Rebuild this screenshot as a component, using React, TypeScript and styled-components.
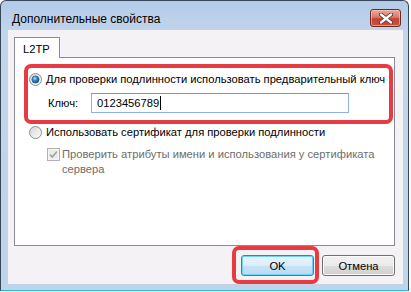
import { FC } from "react";
import styled, { createGlobalStyle } from "styled-components";

const GlobalStyle = createGlobalStyle`
  html, body {
    margin: 0;
    padding: 0;
    background: #ffffff;
  }
  body {
    font-family: "Liberation Sans", Arial, sans-serif;
    font-size: 11.2px;
    color: #000000;
  }
`;

const Radio: FC<{ checked?: boolean }> = ({ checked }) => (
  <RadioBox width="13" height="13" viewBox="0 0 13 13">
    <defs>
      <linearGradient id={checked ? "rb-on" : "rb-off"} x1="0" y1="0" x2="1" y2="1">
        <stop offset="0" stopColor="#d4d4d4" />
        <stop offset="1" stopColor="#ffffff" />
      </linearGradient>
      <radialGradient id="rb-dot" cx="0.4" cy="0.35" r="0.7">
        <stop offset="0" stopColor="#b9e4ff" />
        <stop offset="0.45" stopColor="#2c89d6" />
        <stop offset="1" stopColor="#123f7a" />
      </radialGradient>
    </defs>
    <circle cx="6.5" cy="6.5" r="6" fill={`url(#${checked ? "rb-on" : "rb-off"})`} stroke="#8e8f8f" />
    {checked && <circle cx="6.5" cy="6.5" r="3.6" fill="url(#rb-dot)" stroke="#1c4f8c" strokeWidth="0.6" />}
  </RadioBox>
);

const DisabledCheck: FC = () => (
  <CheckBoxIcon width="13" height="13" viewBox="0 0 13 13">
    <rect x="0.5" y="0.5" width="12" height="12" fill="#f4f4f4" stroke="#b1b1b1" />
    <rect x="2.5" y="2.5" width="8" height="8" fill="#eaeaea" stroke="none" />
    <path d="M3 6.6 L5.2 9 L10 3.4" fill="none" stroke="#a3a3a3" strokeWidth="1.6" />
  </CheckBoxIcon>
);

const App: FC = () => {
  return (
    <>
      <GlobalStyle />
      <Window>
        <TitleBar>
          <Title>Дополнительные свойства</Title>
          <CloseButton aria-label="Закрыть">
            <svg width="14" height="11" viewBox="0 0 14 11">
              <path d="M2 1.5 L12 9.5 M12 1.5 L2 9.5" stroke="#5a2a24" strokeWidth="4" strokeLinecap="round" />
              <path d="M2 1.5 L12 9.5 M12 1.5 L2 9.5" stroke="#ffffff" strokeWidth="2.4" strokeLinecap="round" />
            </svg>
          </CloseButton>
        </TitleBar>
        <Client>
          <TabStrip>
            <Tab $active>L2TP</Tab>
          </TabStrip>
          <TabPanel>
            <Highlight>
              <OptionRow>
                <Radio checked />
                <span>Для проверки подлинности использовать предварительный ключ</span>
              </OptionRow>
              <KeyRow>
                <KeyLabel>Ключ:</KeyLabel>
                <KeyInput>
                  0123456789
                  <Caret />
                </KeyInput>
              </KeyRow>
            </Highlight>
            <OptionRow $indent={14}>
              <Radio />
              <span>Использовать сертификат для проверки подлинности</span>
            </OptionRow>
            <CheckRow>
              <DisabledCheck />
              <CheckLabel>
                Проверить атрибуты имени и использования у сертификата
                <br />
                сервера
              </CheckLabel>
            </CheckRow>
          </TabPanel>
          <ButtonRow>
            <Marked>
              <DialogButton $primary>OK</DialogButton>
            </Marked>
            <DialogButton>Отмена</DialogButton>
          </ButtonRow>
        </Client>
      </Window>
    </>
  );
};

const Window = styled.div`
  box-sizing: border-box;
  width: 409px;
  height: 291px;
  border: 1px solid #37475a;
  border-bottom-color: #22bcd6;
  border-radius: 6px 6px 0 0;
  background: linear-gradient(#b3cbe7 0px, #c1d5ec 30px, #bfd3eb 100%);
  display: flex;
  flex-direction: column;
  overflow: hidden;
`;

const TitleBar = styled.div`
  height: 29px;
  flex: none;
  display: flex;
  align-items: flex-start;
  justify-content: space-between;
  padding: 0 7px 0 11px;
`;

const Title = styled.div`
  font-size: 12px;
  line-height: 16px;
  margin-top: 10px;
  color: #000000;
`;

const CloseButton = styled.div`
  box-sizing: border-box;
  margin-top: 8px;
  width: 31px;
  height: 18px;
  border: 1px solid #6e2a20;
  border-radius: 3px;
  background: linear-gradient(#e9a99b 0%, #d97b6a 45%, #c5432f 55%, #c9523b 100%);
  box-shadow: inset 0 0 0 1px rgba(255, 210, 200, 0.55);
  display: flex;
  align-items: center;
  justify-content: center;
`;

const Client = styled.div`
  box-sizing: border-box;
  height: 254px;
  margin: 0 5px 6px 7px;
  padding: 7px 8px 0 6px;
  background: #f5f2f6;
  display: flex;
  flex-direction: column;
`;

const TabStrip = styled.div`
  display: flex;
  height: 20px;
`;

const Tab = styled.div<{ $active?: boolean }>`
  box-sizing: border-box;
  width: 46px;
  height: 21px;
  padding: 4px 0 0 8px;
  border: 1px solid #898c95;
  border-bottom: none;
  background: ${(p) => (p.$active ? "#ffffff" : "#e8e8ee")};
  position: relative;
  z-index: 1;
  line-height: 14px;
`;

const TabPanel = styled.div`
  box-sizing: border-box;
  height: 189px;
  border: 1px solid #898c95;
  background: #ffffff;
  display: flex;
  flex-direction: column;
`;

const Highlight = styled.div`
  box-sizing: border-box;
  height: 60px;
  margin: 6px 1px 0 9px;
  padding: 3px 0 0 1px;
  border: 4px solid #e63b41;
  border-radius: 7px;
  display: flex;
  flex-direction: column;
`;

const OptionRow = styled.div<{ $indent?: number }>`
  display: flex;
  align-items: center;
  gap: 4px;
  height: 16px;
  padding-left: ${(p) => p.$indent ?? 0}px;
  white-space: nowrap;
`;

const RadioBox = styled.svg`
  flex: none;
  display: block;
`;

const KeyRow = styled.div`
  display: flex;
  align-items: center;
  margin-top: 6px;
  padding-left: 19px;
`;

const KeyLabel = styled.span`
  width: 43px;
`;

const KeyInput = styled.div`
  box-sizing: border-box;
  width: 258px;
  height: 20px;
  border: 1px solid #8db2df;
  border-top-color: #6f9ad0;
  padding: 0 0 0 5px;
  display: flex;
  align-items: center;
`;

const Caret = styled.span`
  display: inline-block;
  width: 1px;
  height: 14px;
  background: #000000;
  margin-left: 1px;
`;

const CheckRow = styled.div`
  display: flex;
  align-items: flex-start;
  gap: 2px;
  margin-top: 7px;
  padding-left: 32px;
  color: #6d6d6d;
  white-space: nowrap;
`;

const CheckBoxIcon = styled.svg`
  flex: none;
  display: block;
  margin-top: 1px;
`;

const CheckLabel = styled.div`
  line-height: 15px;
`;

const ButtonRow = styled.div`
  display: flex;
  justify-content: flex-end;
  gap: 8px;
  margin-top: 9px;
`;

const Marked = styled.div`
  position: relative;
  display: flex;
  &::after {
    content: "";
    position: absolute;
    top: -9px;
    left: -9px;
    right: -5px;
    bottom: -8px;
    border: 4px solid #e63b41;
    border-radius: 7px;
    pointer-events: none;
  }
`;

const DialogButton = styled.div<{ $primary?: boolean }>`
  box-sizing: border-box;
  width: 73px;
  height: 21px;
  border: 1px solid ${(p) => (p.$primary ? "#3c7fb1" : "#707070")};
  border-radius: 3px;
  background: ${(p) =>
    p.$primary
      ? "linear-gradient(#eaf4fc 0%, #dcedfa 50%, #c7e2f6 51%, #b9dbf3 100%)"
      : "linear-gradient(#f2f2f2 0%, #ebebeb 50%, #dddddd 51%, #cfcfcf 100%)"};
  box-shadow: inset 0 0 0 1px ${(p) => (p.$primary ? "#6cd2f8" : "#fbfbfb")};
  display: flex;
  align-items: center;
  justify-content: center;
`;

export default App;
